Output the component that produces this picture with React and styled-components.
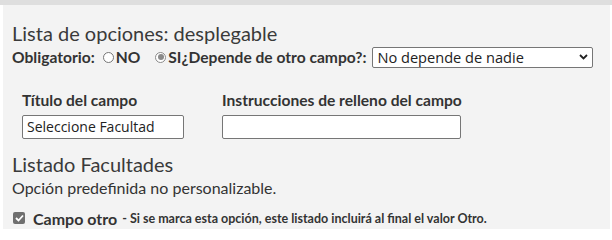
import styled, { createGlobalStyle } from 'styled-components';

const GlobalStyle = createGlobalStyle`
  html, body {
    margin: 0;
    padding: 0;
    background: #ffffff;
    font-family: Lato, "Open Sans", sans-serif;
    color: #333333;
  }
`;

const TopBar = styled.div`
  height: 5px;
  background: #dedede;
`;

const Panel = styled.div`
  margin: 0 2px 0 3px;
  height: 224px;
  box-sizing: border-box;
  background: #f3f3f3;
  padding: 17px 9px 0 9px;
  overflow: hidden;
`;

const Heading = styled.h2`
  margin: 0;
  font-size: 20px;
  font-weight: 400;
  line-height: 22px;
  color: #3a3a3a;
`;

const OptionsRow = styled.div`
  display: flex;
  align-items: center;
  height: 22px;
  margin-top: 2px;
  font-size: 15.6px;
  font-weight: 700;
`;

const Label = styled.span`
  font-weight: 700;
  margin-right: ${(p) => p.$gap || 0}px;
`;

const Radio = styled.span`
  display: inline-block;
  box-sizing: border-box;
  width: 11px;
  height: 11px;
  border-radius: 50%;
  border: 1px solid ${(p) => (p.$checked ? '#8a8a8a' : '#767676')};
  background: #ffffff;
  margin: 0 2px 0 0;
  position: relative;
  &::after {
    content: '';
    display: ${(p) => (p.$checked ? 'block' : 'none')};
    position: absolute;
    left: 1.5px;
    top: 1.5px;
    width: 6px;
    height: 6px;
    border-radius: 50%;
    background: #8a8a8a;
  }
`;

const Select = styled.div`
  margin-left: 6px;
  width: 221px;
  height: 21px;
  box-sizing: border-box;
  border: 1px solid #767676;
  border-radius: 2px;
  background: #ffffff;
  display: flex;
  align-items: center;
  justify-content: space-between;
  padding: 0 4px 0 4px;
  font-family: "Open Sans", sans-serif;
  font-weight: 400;
  font-size: 14.6px;
  color: #222222;
`;

const Fields = styled.div`
  display: flex;
  gap: 38px;
  padding-left: 10px;
  margin-top: 23px;
`;

const Field = styled.div`
  display: flex;
  flex-direction: column;
  gap: 6px;
`;

const FieldLabel = styled.label`
  font-size: 15.6px;
  font-weight: 700;
  line-height: 18px;
`;

const TextInput = styled.div`
  width: ${(p) => p.$width}px;
  height: 24px;
  box-sizing: border-box;
  border: 1px solid #767676;
  border-radius: 2px;
  background: #ffffff;
  font-family: "Open Sans", sans-serif;
  font-size: 14px;
  line-height: 22px;
  padding: 0 4px;
  color: #222222;
`;

const SubHeading = styled(Heading)`
  margin-top: 14px;
`;

const Note = styled.p`
  margin: 3px 0 0 0;
  font-size: 16px;
  line-height: 20px;
`;

const CheckRow = styled.div`
  display: flex;
  align-items: center;
  margin-top: 10px;
  padding-left: 1px;
  height: 20px;
`;

const Check = styled.span`
  width: 12px;
  height: 12px;
  border-radius: 2px;
  background: #6f6f6f;
  display: inline-flex;
  align-items: center;
  justify-content: center;
  margin-right: 8px;
`;

const CheckTitle = styled.span`
  font-size: 16px;
  font-weight: 700;
`;

const Hint = styled.span`
  font-size: 12.5px;
  font-weight: 700;
  margin-left: 5px;
`;

export default function App() {
  return (
    <>
      <GlobalStyle />
      <TopBar />
      <Panel>
        <Heading>Lista de opciones: desplegable</Heading>
        <OptionsRow>
          <Label $gap={8}>Obligatorio:</Label>
          <Radio />
          <Label $gap={15}>NO</Label>
          <Radio $checked />
          <Label>SI</Label>
          <Label>¿Depende de otro campo?:</Label>
          <Select>
            <span>No depende de nadie</span>
            <svg width="9" height="6" viewBox="0 0 9 6">
              <path d="M1 1 L4.5 4.5 L8 1" fill="none" stroke="#222" strokeWidth="1.8" />
            </svg>
          </Select>
        </OptionsRow>
        <Fields>
          <Field>
            <FieldLabel>Título del campo</FieldLabel>
            <TextInput $width={162}>Seleccione Facultad</TextInput>
          </Field>
          <Field>
            <FieldLabel>Instrucciones de relleno del campo</FieldLabel>
            <TextInput $width={239} />
          </Field>
        </Fields>
        <SubHeading>Listado Facultades</SubHeading>
        <Note>Opción predefinida no personalizable.</Note>
        <CheckRow>
          <Check>
            <svg width="9" height="8" viewBox="0 0 9 8">
              <path d="M1 4 L3.5 6.5 L8 1.5" fill="none" stroke="#fff" strokeWidth="1.8" />
            </svg>
          </Check>
          <CheckTitle>Campo otro</CheckTitle>
          <Hint>- Si se marca esta opción, este listado incluirá al final el valor Otro.</Hint>
        </CheckRow>
      </Panel>
    </>
  );
}
